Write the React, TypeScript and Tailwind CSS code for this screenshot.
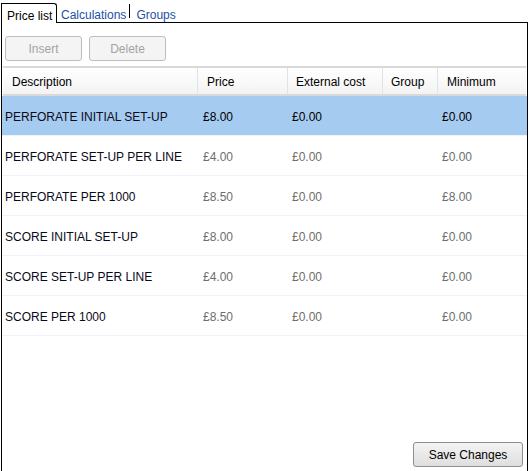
import React from "react";

const rows = [
  { desc: "PERFORATE INITIAL SET-UP", price: "£8.00", ext: "£0.00", group: "", min: "£0.00" },
  { desc: "PERFORATE SET-UP PER LINE", price: "£4.00", ext: "£0.00", group: "", min: "£0.00" },
  { desc: "PERFORATE PER 1000", price: "£8.50", ext: "£0.00", group: "", min: "£8.00" },
  { desc: "SCORE INITIAL SET-UP", price: "£8.00", ext: "£0.00", group: "", min: "£0.00" },
  { desc: "SCORE SET-UP PER LINE", price: "£4.00", ext: "£0.00", group: "", min: "£0.00" },
  { desc: "SCORE PER 1000", price: "£8.50", ext: "£0.00", group: "", min: "£0.00" },
];

export default function App() {
  const selected = 0;
  return (
    <div
      className="w-[529px] h-[471px] bg-white overflow-hidden flex flex-col text-[12px] leading-none text-black"
      style={{ fontFamily: '"Liberation Sans", Arial, sans-serif' }}
    >
      {/* tabs */}
      <div className="h-[22px] flex items-end pl-[1px] shrink-0">
        <div className="h-[20px] w-[56px] border border-b-0 border-black rounded-tr-[3px] bg-white flex items-center pl-[5px] pt-[4px] -mb-[1px] relative z-10">
          Price list
        </div>
        <div className="h-[19px] flex items-start pt-[6px] pl-[4px] text-[#1c4fa6]">
          <span>Calculations</span>
          <span className="w-px h-[14px] bg-black ml-[3px] -mt-[5px]" />
          <span className="ml-[6px]">Groups</span>
        </div>
      </div>

      {/* panel */}
      <div className="ml-[1px] w-[527px] flex-1 border border-b-0 border-black flex flex-col">
        {/* toolbar */}
        <div className="flex gap-[7px] pl-[3px] pt-[13px] h-[43px] shrink-0">
          <button className="w-[77px] h-[25px] rounded-[3px] border border-[#bdbdbd] bg-[#f4f4f4] text-[#a3a3a3] text-[12px] pt-[1px]">
            Insert
          </button>
          <button className="w-[77px] h-[25px] rounded-[3px] border border-[#bdbdbd] bg-[#f4f4f4] text-[#a3a3a3] text-[12px] pt-[1px]">
            Delete
          </button>
        </div>

        {/* grid */}
        <div className="flex-1 flex flex-col">
          <div className="ml-[1px] mr-[1px] h-[30px] border-t-2 border-b-2 border-[#d9d9d9] bg-gradient-to-b from-white to-[#f3f3f3] flex items-center shrink-0">
            <div className="w-[195px] pl-[9px] pt-[2px] h-full flex items-center border-r border-[#e3e3e3]">Description</div>
            <div className="w-[90px] pl-[9px] pt-[2px] h-full flex items-center border-r border-[#e3e3e3]">Price</div>
            <div className="w-[95px] pl-[8px] pt-[2px] h-full flex items-center border-r border-[#e3e3e3]">External cost</div>
            <div className="w-[55px] pl-[8px] pt-[2px] h-full flex items-center border-r border-[#e3e3e3]">Group</div>
            <div className="flex-1 pl-[9px] pt-[2px] h-full flex items-center">Minimum</div>
          </div>

          {rows.map((r, i) => {
            const sel = i === selected;
            const val = sel ? "text-black" : "text-[#6e6e6e]";
            return (
              <div
                key={r.desc}
                className={`h-[40px] flex items-center pt-[2px] border-b border-[#eef3fa] ${sel ? "bg-[#a6cbf0]" : "bg-white"}`}
              >
                <div className="w-[198px] pl-[3px] text-[#0a0a1a]">{r.desc}</div>
                <div className={`w-[90px] pl-[3px] ${val}`}>{r.price}</div>
                <div className={`w-[95px] pl-[2px] ${val}`}>{r.ext}</div>
                <div className={`w-[55px] ${val}`}>{r.group}</div>
                <div className={`flex-1 pl-[2px] ${val}`}>{r.min}</div>
              </div>
            );
          })}

          <div className="flex-1 flex items-end justify-end pr-[4px] pb-[4px]">
            <button className="w-[110px] h-[25px] rounded-[3px] border border-[#8e8e8e] bg-gradient-to-b from-[#f4f4f4] to-[#dedede] text-black text-[12px]">
              Save Changes
            </button>
          </div>
        </div>
      </div>
    </div>
  );
}
